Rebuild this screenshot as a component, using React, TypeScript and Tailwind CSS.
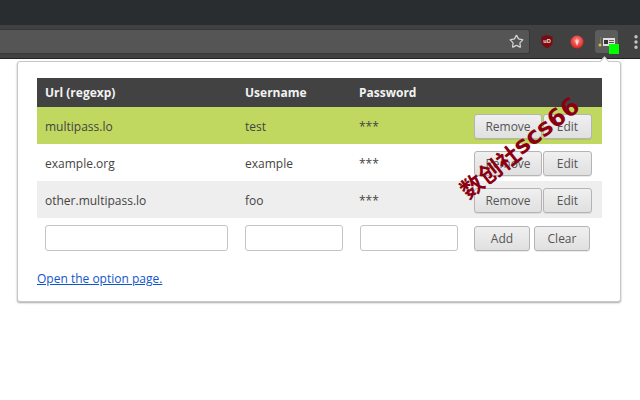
import React from "react";
import { Star, MoreVertical } from "lucide-react";

const rows = [
  { url: "multipass.lo", user: "test", bg: "bg-[#c0d860]" },
  { url: "example.org", user: "example", bg: "bg-white" },
  { url: "other.multipass.lo", user: "foo", bg: "bg-[#eeeeee]" },
];

const btn =
  "h-[25px] rounded-[3px] border border-[#b4b4b4] bg-gradient-to-b from-[#f0f0f0] to-[#e0e0e0] text-[12px] leading-none text-[#555555] shadow-[0_1px_0_rgba(0,0,0,0.08)]";
const input = "h-[26px] rounded-[3px] border border-[#c4c4c4] bg-white";

const ToolbarIcons = () => (
  <div className="flex h-full shrink-0 items-center">
    <div className="ml-[5px] flex h-6 w-6 items-center justify-center">
      <svg width="14" height="15" viewBox="0 0 14 16">
        <path d="M7 1 L13 3 V8 C13 12 10 14 7 15 C4 14 1 12 1 8 V3 Z" fill="#7a0c10" />
        <text x="7" y="10" textAnchor="middle" fontSize="6" fontWeight="700" fill="#f0e0e0" fontFamily="Liberation Sans, sans-serif">uD</text>
      </svg>
    </div>
    <div className="ml-[6px] flex h-6 w-6 items-center justify-center">
      <svg width="14" height="14" viewBox="0 0 14 14">
        <defs>
          <radialGradient id="ball" cx="50%" cy="40%" r="60%">
            <stop offset="0%" stopColor="#ff8a80" />
            <stop offset="100%" stopColor="#dd1f1f" />
          </radialGradient>
        </defs>
        <circle cx="7" cy="7" r="6.5" fill="url(#ball)" />
        <path d="M4.5 4 L7 11 L9.5 4 L8 6 L7 3 L6 6 Z" fill="#f7d8d4" />
      </svg>
    </div>
    <div className="relative ml-[6px] flex h-[23px] w-[23px] items-center justify-center rounded-[3px] bg-[#5c5c5c]">
      <svg width="17" height="14" viewBox="0 0 17 14">
        <rect x="5" y="3" width="12" height="8" fill="#e0e0e0" />
        <rect x="6" y="5" width="4" height="4" fill="#333333" />
        <rect x="11" y="5" width="5" height="1" fill="#8a5a3a" />
        <rect x="11" y="7" width="5" height="1" fill="#4a4a7a" />
        <rect x="2" y="2" width="1" height="7" fill="#7a7a50" />
        <circle cx="2" cy="10" r="1.5" fill="#d8c040" />
      </svg>
      <div className="absolute left-[14px] top-[14px] h-[10px] w-[10px] bg-[#00ff00]" />
    </div>
    <MoreVertical className="ml-[9px] h-[18px] w-[18px] shrink-0 text-[#c8c8c8]" strokeWidth={2.5} />
  </div>
);

export default function App() {
  return (
    <div className="relative h-[400px] w-[640px] overflow-hidden bg-white font-['Open_Sans','Noto_Sans',sans-serif] text-[12px] text-[#444444]">
      <div className="h-[25px] bg-[#2a2d2f]" />
      <div className="flex h-[34px] items-center border-b border-[#222222] bg-[#414141]">
        <div className="flex h-[25px] w-[530px] shrink-0 items-center justify-end rounded-r-[3px] border border-l-0 border-[#383838] bg-[#555555] pr-[5px]">
          <Star className="h-[15px] w-[15px] text-[#d4d4d4]" strokeWidth={2} />
        </div>
        <ToolbarIcons />
      </div>

      <div className="relative ml-[17px] mt-[2px] w-[604px] rounded-[3px] border border-[#c8c8c8] bg-white px-[19px] pb-[13px] pt-[16px] shadow-[0_1px_2px_rgba(0,0,0,0.35)]">
        <div className="absolute -top-[4px] left-[583px] h-[7px] w-[7px] rotate-45 border-l border-t border-[#c8c8c8] bg-white" />
        <div className="flex h-[29px] w-[565px] items-center bg-[#424242] font-bold leading-none text-[#f2f2f2]">
          <div className="w-[200px] pl-2">Url (regexp)</div>
          <div className="w-[114px] pl-2">Username</div>
          <div className="pl-2">Password</div>
        </div>
        {rows.map((row) => (
          <div key={row.url} className={`flex h-[37px] w-[565px] items-center pt-[2px] ${row.bg}`}>
            <div className="w-[200px] pl-2">{row.url}</div>
            <div className="w-[114px] pl-2">{row.user}</div>
            <div className="w-[123px] pl-2">***</div>
            <div className="flex gap-px">
              <button className={`${btn} w-[68px]`}>Remove</button>
              <button className={`${btn} w-[49px]`}>Edit</button>
            </div>
          </div>
        ))}
        <div className="flex h-[40px] w-[565px] items-center">
          <div className="w-[200px] pl-2"><div className={`${input} w-[183px]`} /></div>
          <div className="w-[115px] pl-2"><div className={`${input} w-[98px]`} /></div>
          <div className="w-[122px] pl-2"><div className={`${input} w-[98px]`} /></div>
          <div className="flex gap-[4px] pt-px">
            <button className={`${btn} w-[56px]`}>Add</button>
            <button className={`${btn} w-[56px]`}>Clear</button>
          </div>
        </div>
        <a className="mt-[12px] block text-[12px] leading-[18px] text-[#1155cc] underline">Open the option page.</a>
      </div>

      <div className="absolute left-[462px] top-[180px] flex origin-left -rotate-[38deg] items-center whitespace-nowrap text-[#8a0010]">
        <span className="font-['Noto_Sans_CJK_SC',sans-serif] text-[23px] font-bold leading-none">数创社</span>
        <span className="font-['DejaVu_Sans',sans-serif] text-[24px] font-bold leading-none">scs66</span>
      </div>
    </div>
  );
}
